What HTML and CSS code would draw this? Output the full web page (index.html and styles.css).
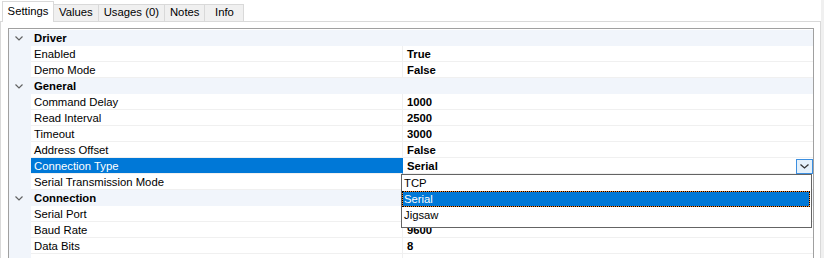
FILE: index.html
```html
<!DOCTYPE html>
<html>
<head>
<meta charset="utf-8">
<link rel="stylesheet" href="styles.css">
</head>
<body>
<div class="window">
  <div class="main">
    <div class="tabs">
      <div class="tab active">Settings</div>
      <div class="tab">Values</div>
      <div class="tab">Usages (0)</div>
      <div class="tab">Notes</div>
      <div class="tab">Info</div>
    </div>
    <div class="panel">
      <div class="grid">
        <div class="cat"><span class="gutter"><svg class="chev" width="8" height="5" viewBox="0 0 8 5"><polyline points="0.5,0.5 4,4 7.5,0.5" fill="none" stroke="#626262" stroke-width="1.2"/></svg></span><span class="cat-name">Driver</span></div>
        <div class="prop"><span class="gutter"></span><span class="label">Enabled</span><span class="value">True</span></div>
        <div class="prop"><span class="gutter"></span><span class="label">Demo Mode</span><span class="value">False</span></div>
        <div class="cat"><span class="gutter"><svg class="chev" width="8" height="5" viewBox="0 0 8 5"><polyline points="0.5,0.5 4,4 7.5,0.5" fill="none" stroke="#626262" stroke-width="1.2"/></svg></span><span class="cat-name">General</span></div>
        <div class="prop"><span class="gutter"></span><span class="label">Command Delay</span><span class="value">1000</span></div>
        <div class="prop"><span class="gutter"></span><span class="label">Read Interval</span><span class="value">2500</span></div>
        <div class="prop"><span class="gutter"></span><span class="label">Timeout</span><span class="value">3000</span></div>
        <div class="prop"><span class="gutter"></span><span class="label">Address Offset</span><span class="value">False</span></div>
        <div class="prop selected"><span class="gutter"></span><span class="label">Connection Type</span><span class="value">Serial
            <span class="dd-btn"><svg width="9" height="5" viewBox="0 0 9 5"><polyline points="0.5,0.5 4.5,4 8.5,0.5" fill="none" stroke="#333" stroke-width="1.3"/></svg></span>
            <span class="dd-list">
              <span class="dd-item">TCP</span>
              <span class="dd-item hot">Serial</span>
              <span class="dd-item">Jigsaw</span>
            </span>
          </span></div>
        <div class="prop"><span class="gutter"></span><span class="label">Serial Transmission Mode</span><span class="value"></span></div>
        <div class="cat"><span class="gutter"><svg class="chev" width="8" height="5" viewBox="0 0 8 5"><polyline points="0.5,0.5 4,4 7.5,0.5" fill="none" stroke="#626262" stroke-width="1.2"/></svg></span><span class="cat-name">Connection</span></div>
        <div class="prop"><span class="gutter"></span><span class="label">Serial Port</span><span class="value"></span></div>
        <div class="prop"><span class="gutter"></span><span class="label">Baud Rate</span><span class="value">9600</span></div>
        <div class="prop"><span class="gutter"></span><span class="label">Data Bits</span><span class="value">8</span></div>
        <div class="prop"><span class="gutter"></span><span class="label">Parity</span><span class="value">Even</span></div>
      </div>
    </div>
  </div>
  <div class="strip"></div>
</div>
</body>
</html>
```
FILE: styles.css
```css
html, body {
  margin: 0;
  padding: 0;
  background: #ffffff;
  overflow: hidden;
  height: 258px;
}
body {
  font-family: "Liberation Sans", Arial, sans-serif;
  font-size: 11.3px;
  color: #000;
}
.window {
  display: flex;
  height: 258px;
}
.main {
  width: 821px;
  display: flex;
  flex-direction: column;
}
.strip {
  flex: 1;
  background: #f0f0f0;
}
.tabs {
  height: 21px;
  display: flex;
  align-items: flex-end;
  padding-left: 2px;
  position: relative;
  z-index: 2;
}
.tab {
  box-sizing: border-box;
  height: 17px;
  min-width: 40px;
  padding: 0 5px;
  border: 1px solid #d9d9d9;
  border-bottom: none;
  margin-left: -1px;
  background: #f0f0f0;
  display: flex;
  align-items: center;
  justify-content: center;
  line-height: 1;
}
.tab:first-child { margin-left: 0; }
.tab.active {
  height: 21px;
  width: 52px;
  background: #ffffff;
  margin-bottom: -1px;
  padding-bottom: 1px;
}
.panel {
  flex: 1;
  border: 1px solid #d9d9d9;
  border-bottom: none;
  padding: 6px 6px 0 7px;
  min-height: 0;
  overflow: hidden;
}
.grid {
  border: 1px solid #a0a0a0;
  border-bottom: none;
  background: #fff;
  height: 300px;
  padding-top: 1px;
}
.cat, .prop {
  display: flex;
  height: 16px;
  line-height: 16px;
}
.cat {
  background: #f1f5fb;
}
.gutter {
  width: 22px;
  flex: none;
  background: #f1f5fb;
  display: flex;
  align-items: center;
  justify-content: center;
}
.chev {
  margin-left: -2px;
  margin-top: 1px;
}
.cat-name {
  font-weight: bold;
  padding-left: 3px;
}
.label {
  width: 372px;
  flex: none;
  box-sizing: border-box;
  padding-left: 3px;
  border-bottom: 1px solid #f0f0f0;
  border-right: 1px solid #f0f0f0;
  white-space: nowrap;
}
.value {
  flex: 1;
  padding-left: 4px;
  font-weight: bold;
  border-bottom: 1px solid #f0f0f0;
  position: relative;
}
.prop.selected .label {
  background: #0078d7;
  color: #fff;
  border-right-color: #0078d7;
}
.dd-btn {
  position: absolute;
  right: 0;
  top: 1px;
  width: 17px;
  height: 15px;
  box-sizing: border-box;
  border: 1px solid #3c8fe0;
  background: #e5f1fb;
  display: flex;
  align-items: center;
  justify-content: center;
}
.dd-list {
  position: absolute;
  left: -2px;
  top: 16px;
  width: 411px;
  height: 54px;
  box-sizing: border-box;
  border: 1px solid #646464;
  background: #fff;
  display: flex;
  flex-direction: column;
  z-index: 3;
  font-weight: normal;
}
.dd-item {
  height: 16px;
  line-height: 16px;
  padding-left: 2px;
  box-sizing: border-box;
}
.dd-item.hot {
  color: #fff;
  border: 1px dotted #000;
  background: linear-gradient(#0078d7, #0078d7) padding-box, #ff8728 border-box;
  line-height: 14px;
  padding-left: 1px;
  margin-right: 1px;
}
```
